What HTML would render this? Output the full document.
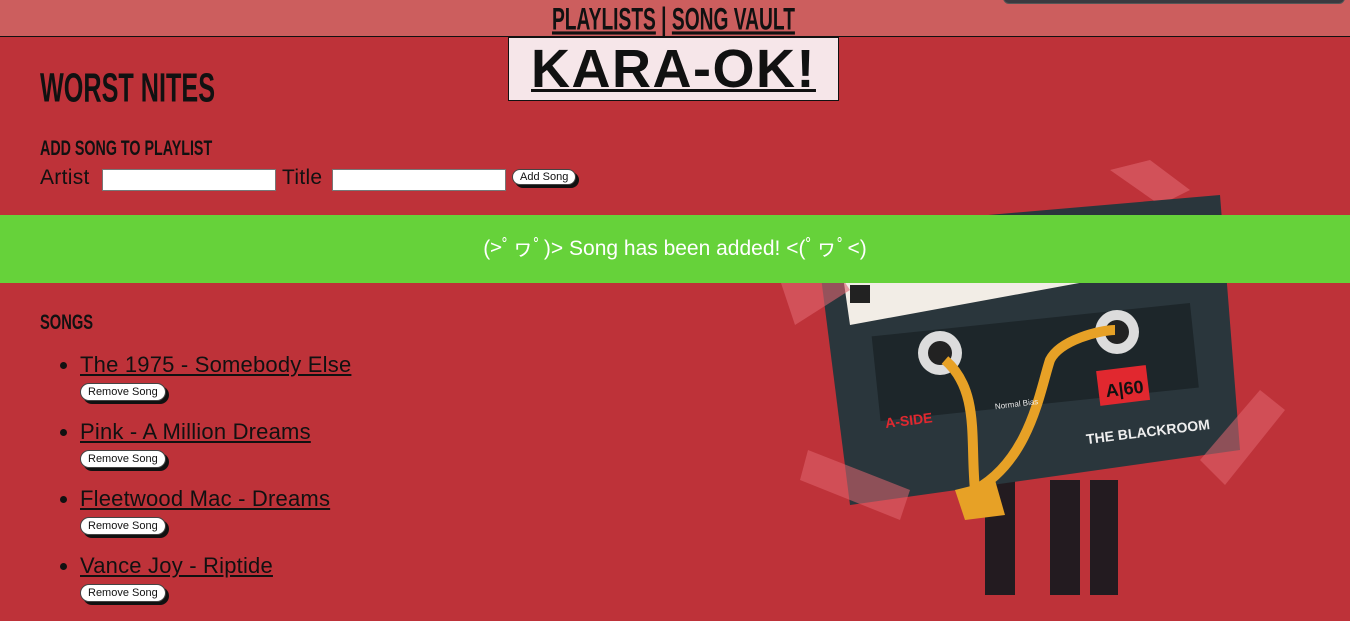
<!DOCTYPE html>
<html><head><meta charset="utf-8"><style>
*{margin:0;padding:0;box-sizing:border-box}
body{width:1350px;height:595px;overflow:hidden;background:#be3239;font-family:"Liberation Sans","Noto Sans CJK JP",sans-serif;position:relative;color:#111}
.cond{font-family:"Liberation Sans",sans-serif;font-weight:bold;display:inline-block;transform-origin:left top;white-space:nowrap}
.hdr{position:absolute;left:0;top:0;width:1350px;height:37px;background:#cc5e5e;border-bottom:1px solid #111}
.topbar{position:absolute;left:1003px;top:-8px;width:342px;height:12px;background:#3a3a40;border-radius:6px;border:1px solid #555}
.nav{position:absolute;left:552px;top:2px;font-size:30px;color:#111;white-space:nowrap}
.nav u{text-decoration:underline;text-decoration-thickness:3px}
.logo{position:absolute;left:508px;top:37px;width:331px;height:64px;background:#f6e6e9;border:1px solid #111;text-align:center}
.logo span{font-family:"Liberation Sans",sans-serif;font-weight:bold;font-size:54px;letter-spacing:1.5px;line-height:62px;color:#111;text-decoration:underline;text-decoration-thickness:3px}
.h1{position:absolute;left:40px;top:66px;font-size:40px}
.h2{position:absolute;left:40px;top:137px;font-size:21px}
.lbl{position:absolute;top:166px;font-size:21px;letter-spacing:.3px}
.inp{position:absolute;top:169px;width:174px;height:22px;background:#fff;border:1px solid #777}
.btn{background:#fff;border:1.5px solid #444;border-radius:10px;font-size:11px;padding:1px 7px;box-shadow:3px 3px 0 #111;color:#111}
.banner{position:absolute;left:0;top:215px;width:1350px;height:68px;background:#66d23a;color:#fff;font-size:21px;letter-spacing:0;text-align:center;line-height:68px}
.songs{position:absolute;left:40px;top:311px;font-size:21px}
ul{position:absolute;left:62px;top:353px;list-style:disc;font-size:22px;letter-spacing:.2px}
li{margin-left:18px;height:67px;line-height:24px}
li a{color:#111;text-decoration:underline}
li .btn{display:inline-block;margin:0;font-size:11px;line-height:14px;padding:1px 7px;position:relative;top:-1px;letter-spacing:0}
</style></head><body>
<div class="hdr"></div>
<div class="topbar"></div>
<div class="nav"><span class="cond" style="transform:scale(0.64,1.05)"><u>PLAYLISTS</u>&nbsp;|&nbsp;<u>SONG VAULT</u></span></div>

<svg style="position:absolute;left:780px;top:160px" width="540" height="435" viewBox="0 0 540 435">
 <g fill="#231b20"><rect x="205" y="320" width="30" height="120"/><rect x="270" y="320" width="30" height="120"/><rect x="310" y="320" width="28" height="120"/></g>
 <polygon points="330,10 370,0 410,30 380,45" fill="#e06670" opacity=".6"/>
 <polygon points="35,70 440,35 460,290 70,345" fill="#2a363c"/>
 <polygon points="60,95 420,60 425,100 70,165" fill="#f2ede6"/>
 <rect x="70" y="125" width="20" height="18" fill="#222"/>
 <rect x="95" y="160" width="320" height="85" fill="#1d262a" transform="rotate(-6 250 200)"/>
 <circle cx="160" cy="193" r="22" fill="#dcdcdc"/><circle cx="160" cy="193" r="12" fill="#222"/>
 <circle cx="337" cy="172" r="22" fill="#dcdcdc"/><circle cx="337" cy="172" r="12" fill="#222"/>
 <path d="M165,200 C200,230 190,280 195,330 M195,330 C250,300 260,230 270,200 C280,180 320,170 335,170" stroke="#e7a126" stroke-width="10" fill="none"/>
 <polygon points="175,330 215,320 225,355 185,360" fill="#e7a126"/>
 <rect x="318" y="208" width="50" height="35" fill="#e1282f" transform="rotate(-7 343 225)"/>
 <text x="325" y="235" font-size="18" font-weight="bold" fill="#111" font-family="Liberation Sans" transform="rotate(-7 343 225)">A|60</text>
 <text x="105" y="265" font-size="14" font-weight="bold" fill="#e1282f" font-family="Liberation Sans" transform="rotate(-7 130 260)">A-SIDE</text>
 <text x="305" y="275" font-size="14" font-weight="bold" fill="#eee" font-family="Liberation Sans" transform="rotate(-7 380 265)">THE BLACKROOM</text>
 <text x="215" y="245" font-size="8" fill="#eee" font-family="Liberation Sans" transform="rotate(-7 250 245)">Normal Bias</text>
 <polygon points="0,120 50,100 70,130 15,165" fill="#e06670" opacity=".6"/>
 <polygon points="28,290 130,330 120,360 20,320" fill="#e06670" opacity=".55"/>
 <polygon points="420,300 480,230 505,250 445,325" fill="#e06670" opacity=".55"/>
</svg>

<div class="logo"><span>KARA-OK!</span></div>
<div class="h1"><span class="cond" style="transform:scale(0.63,1.02)">WORST NITES</span></div>
<div class="h2"><span class="cond" style="transform:scale(0.68,1)">ADD SONG TO PLAYLIST</span></div>
<span class="lbl" style="left:40px">Artist</span><span class="inp" style="left:102px"></span>
<span class="lbl" style="left:282px">Title</span><span class="inp" style="left:332px"></span>
<span class="btn" style="position:absolute;left:512px;top:169px">Add Song</span>
<div class="banner">(&gt;ﾟヮﾟ)&gt; Song has been added! &lt;(ﾟヮﾟ&lt;)</div>
<div class="songs"><span class="cond" style="transform:scale(0.7,1)">SONGS</span></div>
<ul>
<li><a>The 1975 - Somebody Else</a><br><span class="btn">Remove Song</span></li>
<li><a>Pink - A Million Dreams</a><br><span class="btn">Remove Song</span></li>
<li><a>Fleetwood Mac - Dreams</a><br><span class="btn">Remove Song</span></li>
<li><a>Vance Joy - Riptide</a><br><span class="btn">Remove Song</span></li>
</ul>
</body></html>
